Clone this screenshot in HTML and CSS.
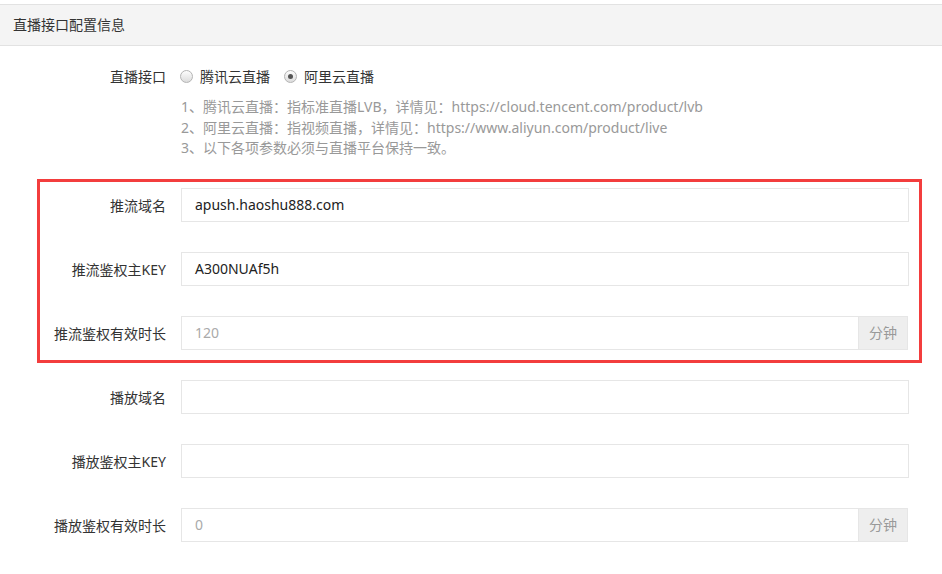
FILE: index.html
```html
<!DOCTYPE html>
<html lang="zh-CN">
<head>
    <meta charset="UTF-8">
    <meta name="viewport" content="width=device-width, initial-scale=1.0">
    <title>直播接口配置信息</title>
    <link rel="stylesheet" href="styles.css">
</head>
<body>
    <div class="panel">
        <div class="panel-heading">直播接口配置信息</div>
        <div class="panel-body">
            <div class="row row-radio">
                <div class="label">直播接口</div>
                <div class="field">
                    <label class="radio"><span class="dot"></span>腾讯云直播</label>
                    <label class="radio"><span class="dot checked"></span>阿里云直播</label>
                </div>
            </div>
            <div class="help">
                <p>1、腾讯云直播：指标准直播LVB，详情见：https://cloud.tencent.com/product/lvb</p>
                <p>2、阿里云直播：指视频直播，详情见：https://www.aliyun.com/product/live</p>
                <p>3、以下各项参数必须与直播平台保持一致。</p>
            </div>

            <div class="group">
                <div class="row">
                    <div class="label">推流域名</div>
                    <div class="field"><div class="input">apush.haoshu888.com</div></div>
                </div>
                <div class="row">
                    <div class="label">推流鉴权主KEY</div>
                    <div class="field"><div class="input">A300NUAf5h</div></div>
                </div>
                <div class="row">
                    <div class="label">推流鉴权有效时长</div>
                    <div class="field input-group">
                        <div class="input muted">120</div>
                        <div class="addon">分钟</div>
                    </div>
                </div>
            </div>

            <div class="rows">
                <div class="row">
                    <div class="label">播放域名</div>
                    <div class="field"><div class="input"></div></div>
                </div>
                <div class="row">
                    <div class="label">播放鉴权主KEY</div>
                    <div class="field"><div class="input"></div></div>
                </div>
                <div class="row">
                    <div class="label">播放鉴权有效时长</div>
                    <div class="field input-group">
                        <div class="input muted">0</div>
                        <div class="addon">分钟</div>
                    </div>
                </div>
            </div>
        </div>
    </div>
</body>
</html>
```

FILE: styles.css
```css
body {
    margin: 0;
    font-family: "Noto Sans", "Noto Sans CJK SC", sans-serif;
    font-size: 14px;
    color: #333;
    background: #fff;
}

.panel {
    margin-top: 4px;
}

.panel-heading {
    height: 40px;
    line-height: 40px;
    padding-left: 13px;
    background-color: #f4f4f4;
    border-top: 1px solid #e2e2e2;
    border-bottom: 1px solid #e2e2e2;
    font-size: 14px;
    color: #333;
}

.panel-body {
    padding-top: 13px;
}

.row {
    display: flex;
    align-items: center;
    height: 34px;
    padding-right: 33px;
}

.label {
    width: 166px;
    flex-shrink: 0;
    text-align: right;
    margin-right: 15px;
    white-space: nowrap;
}

.field {
    flex: 1;
    display: flex;
    align-items: center;
}

.radio {
    display: flex;
    align-items: center;
    margin-right: 15px;
}

.dot {
    width: 11px;
    height: 11px;
    border: 1px solid #b4b4b4;
    border-radius: 50%;
    background: linear-gradient(#fdfdfd, #dcdcdc);
    margin: 0 7px 0 -1px;
    display: flex;
    align-items: center;
    justify-content: center;
}

.dot.checked::after {
    content: "";
    width: 5px;
    height: 5px;
    border-radius: 50%;
    background: #555;
}

.help {
    margin-left: 181px;
    margin-top: 4px;
    color: #999;
    line-height: 20.5px;
}

.help p {
    margin: 0;
}

.group {
    margin: 20px 20px 0 37px;
    border: 3px solid #f33d3d;
    padding: 6px 0 10px;
}

.group .row {
    padding-right: 10px;
}

.group .label {
    width: 126px;
}

.group .row + .row,
.rows .row + .row {
    margin-top: 30px;
}

.rows {
    margin-top: 17px;
}

.input {
    flex: 1;
    height: 32px;
    line-height: 32px;
    border: 1px solid #e6e6e6;
    padding-left: 13px;
    font-size: 14px;
    color: #222;
}

.input.muted {
    color: #aaa;
}

.input-group .input {
    border-right: none;
}

.addon {
    width: 48px;
    height: 32px;
    line-height: 32px;
    text-align: center;
    background-color: #eee;
    border: 1px solid #e6e6e6;
    color: #999;
    margin-right: 1px;
}
```
